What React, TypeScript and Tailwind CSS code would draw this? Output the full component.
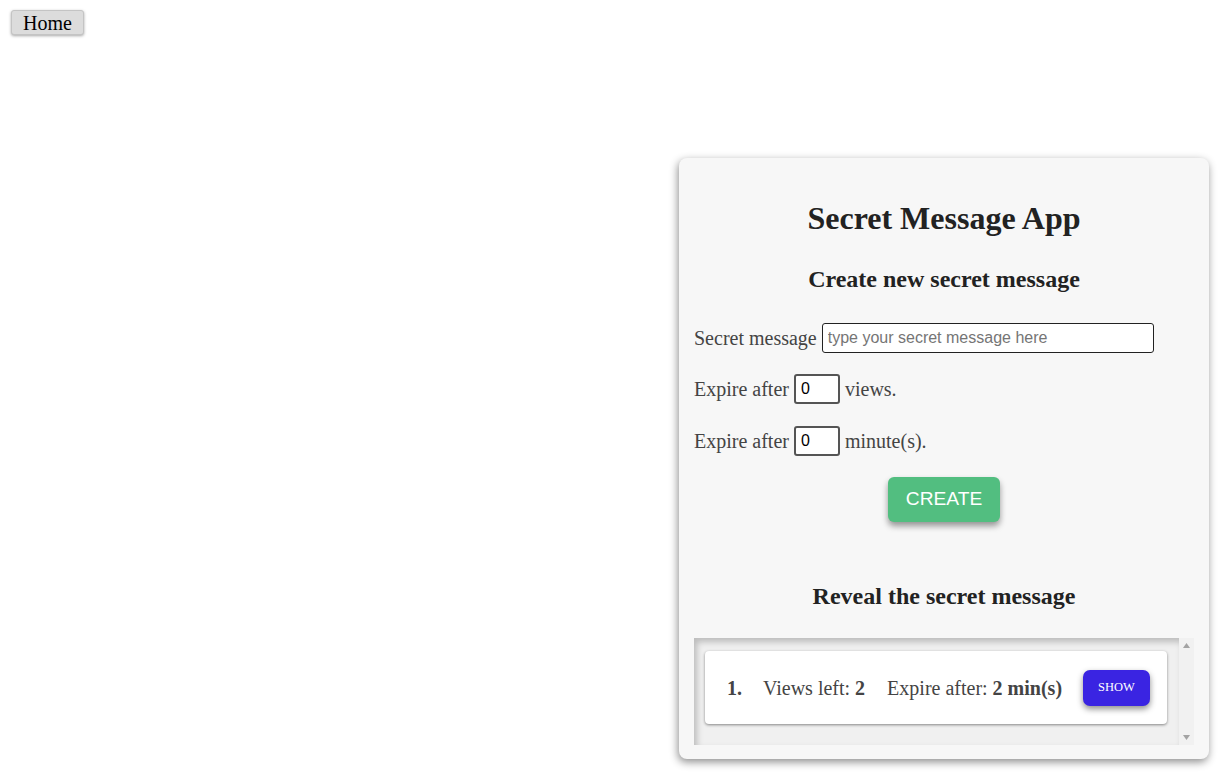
import React from 'react'

const serif = "font-['Liberation_Serif','Times_New_Roman',serif]"
const sans = "font-['Liberation_Sans',Arial,sans-serif]"

function ListItem({ index, views, mins }: { index: number; views: number; mins: number }) {
  return (
    <div className="flex items-center h-[73px] bg-white rounded-[4px] shadow-[0_1px_3px_rgba(0,0,0,0.45)] pl-[22px] pr-[17px] text-[20px] text-[#444]">
      <span className="font-bold w-[36px]">{index}.</span>
      <span>
        Views left: <b>{views}</b>
      </span>
      <span className="ml-[22px]">
        Expire after: <b>{mins} min(s)</b>
      </span>
      <button className="ml-auto w-[67px] h-[36px] rounded-[7px] bg-[#3a24e2] text-white text-[12.5px] shadow-[0_3px_6px_rgba(0,0,0,0.45)]">
        SHOW
      </button>
    </div>
  )
}

export default function App() {
  return (
    <div className={`${serif} min-h-[776px] bg-white`}>
      <div className="flex pt-[10px] pl-[11px]">
        <button className="h-[25px] px-[11px] text-[20px] leading-[20px] text-black bg-[#dcdcdc] border border-[#c4c4c4] rounded-[3px] shadow-[0_1px_3px_rgba(0,0,0,0.35)]">
          Home
        </button>
      </div>

      <div className="flex justify-end pr-[17px] mt-[123px]">
        <div className="w-[530px] bg-[#f7f7f7] rounded-[8px] shadow-[-1px_3px_8px_rgba(0,0,0,0.45)] pt-[42px] pb-[14px] px-[15px]">
          <h1 className="text-center text-[32px] leading-[37px] font-bold text-[#222]">Secret Message App</h1>
          <h2 className="text-center text-[24px] leading-[28px] font-bold text-[#222] mt-[28px]">Create new secret message</h2>

          <div className="mt-[30px] flex items-center text-[20px] text-[#444]">
            <span>Secret message</span>
            <input
              className={`${sans} ml-[5px] w-[332px] h-[30px] border border-[#222] rounded-[3px] bg-white px-[5px] text-[16px] text-black placeholder:text-[#757575] outline-none`}
              placeholder="type your secret message here"
            />
          </div>

          <div className="mt-[21px] flex items-center text-[20px] text-[#444]">
            <span>Expire after</span>
            <input
              className={`${sans} mx-[5px] w-[46px] h-[30px] border-2 border-[#555] rounded-[3px] bg-white px-[5px] text-[16px] text-black outline-none`}
              defaultValue="0"
            />
            <span>views.</span>
          </div>

          <div className="mt-[22px] flex items-center text-[20px] text-[#444]">
            <span>Expire after</span>
            <input
              className={`${sans} mx-[5px] w-[46px] h-[30px] border-2 border-[#555] rounded-[3px] bg-white px-[5px] text-[16px] text-black outline-none`}
              defaultValue="0"
            />
            <span>minute(s).</span>
          </div>

          <div className="mt-[21px] flex justify-center">
            <button className={`${sans} w-[112px] h-[45px] rounded-[6px] bg-[#52be80] text-white text-[19.2px] shadow-[0_4px_6px_rgba(0,0,0,0.4)]`}>
              CREATE
            </button>
          </div>

          <h2 className="text-center text-[24px] leading-[28px] font-bold text-[#222] mt-[60px]">Reveal the secret message</h2>

          <div className="mt-[28px] flex h-[107px] bg-[#f0f0f0]">
            <div className="flex-1 pt-[13px] pl-[11px] pr-[12px] shadow-[inset_3px_4px_6px_rgba(0,0,0,0.22)]">
              <ListItem index={1} views={2} mins={2} />
            </div>
            <div className="w-[15px] bg-[#f1f1f1] flex flex-col items-center justify-between py-[5px]">
              <svg width="7" height="5" viewBox="0 0 7 5">
                <path d="M3.5 0 L7 5 L0 5 Z" fill="#a3a3a3" />
              </svg>
              <svg width="7" height="5" viewBox="0 0 7 5">
                <path d="M0 0 L7 0 L3.5 5 Z" fill="#a3a3a3" />
              </svg>
            </div>
          </div>
        </div>
      </div>
    </div>
  )
}
